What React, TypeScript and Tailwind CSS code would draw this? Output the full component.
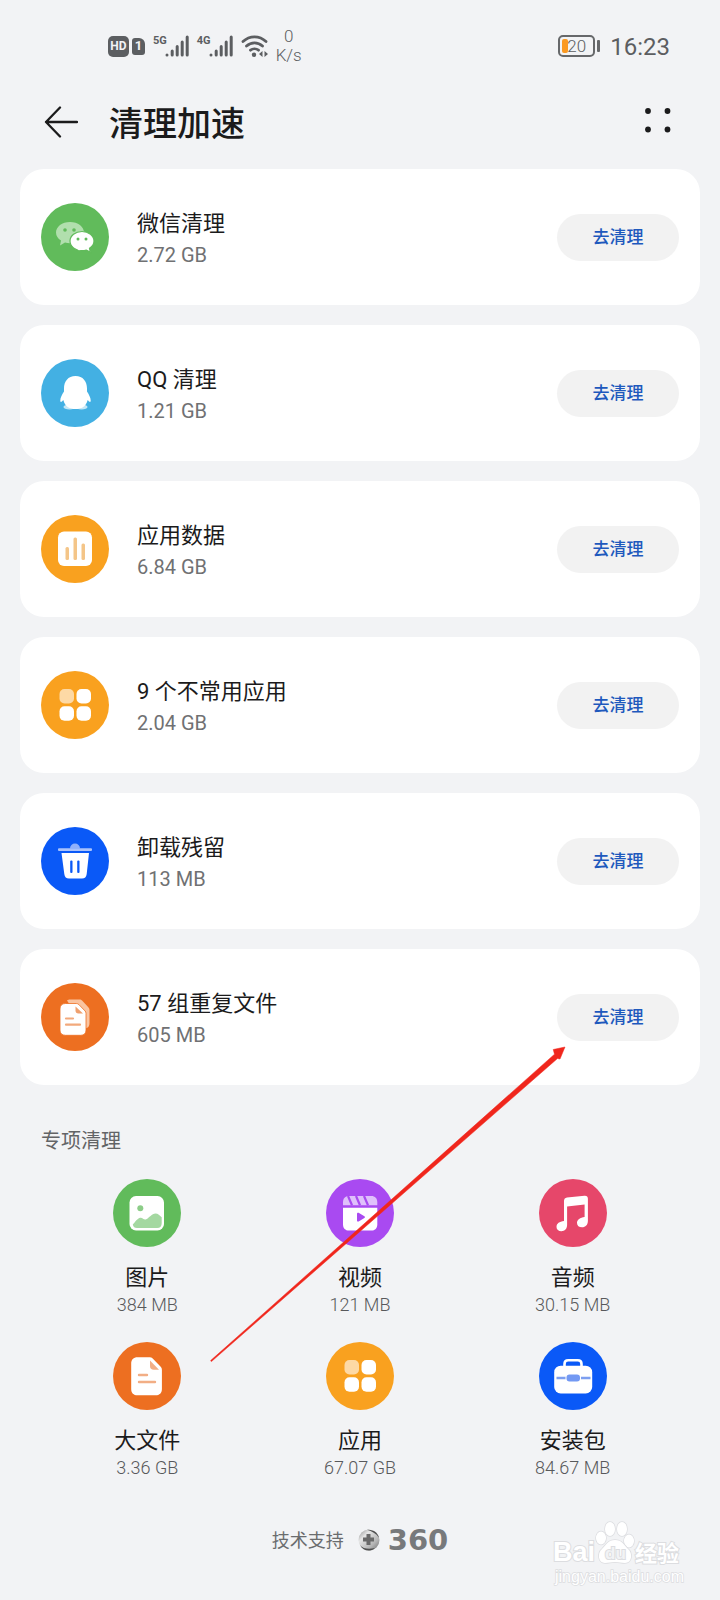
import type { ReactNode } from "react"

type CleanItem = {
  title: string
  size: string
  icon: ReactNode
}

function Disc({ color, children }: { color: string; children: ReactNode }) {
  return (
    <svg viewBox="0 0 68 68" className="size-[68px] shrink-0" fill="#fff" aria-hidden="true">
      <circle cx="34" cy="34" r="34" fill={color} />
      {children}
    </svg>
  )
}

function WechatIcon() {
  return (
    <Disc color="#61bb5b">
      <path d="M29 19c-8 0-14 4.700-14 10.500 0 3.300 1.900 6.200 5 8.100l-1 4.900 5-3c1.600.5 3.200.7 5 .7 8 0 14-4.900 14-10.700S37 19 29 19z" fill="#b1dfad" />
      <circle cx="24" cy="27" r="1.800" fill="#61bb5b" />
      <circle cx="33" cy="27" r="1.800" fill="#61bb5b" />
      <path d="M41 28.500c-6.700 0-12 4.300-12 9.600s5.300 9.600 12 9.600c1.600 0 3-.2 4.300-.6l4 2-.8-3.800c2.800-1.700 4.500-4.300 4.500-7.200 0-5.300-5.300-9.600-12-9.600z" stroke="#61bb5b" strokeWidth="1.200" />
      <circle cx="37" cy="36" r="1.500" fill="#61bb5b" />
      <circle cx="45" cy="36" r="1.500" fill="#61bb5b" />
    </Disc>
  )
}

function QQIcon() {
  return (
    <Disc color="#43b0e3">
      <ellipse cx="28.500" cy="48" rx="6" ry="2.600" fill="#c5e7f6" />
      <ellipse cx="40.500" cy="48" rx="6" ry="2.600" fill="#c5e7f6" />
      <path d="M34.500 17c-7.500 0-11.500 5.500-11.500 12.500v3c-2 3.200-3.700 6.200-3.700 9 0 2.300 1.300 1.500 3-.5 1 3.600 2.700 5.700 4.700 7.200 4.500 2.400 10.500 2.400 15 0 2-1.500 3.700-3.600 4.700-7.200 1.700 2 3 2.800 3 .5 0-2.800-1.700-5.800-3.700-9v-3C46 22.500 42 17 34.500 17z" />
    </Disc>
  )
}

function DataIcon() {
  return (
    <Disc color="#f9a11f">
      <rect x="17" y="16.500" width="34" height="34.500" rx="6" />
      <g fill="#f4c588">
        <rect x="24.500" y="32" width="3.500" height="13" rx="1.500" />
        <rect x="32.500" y="22.500" width="3.500" height="22.500" rx="1.500" />
        <rect x="40.500" y="28.500" width="3.500" height="16.500" rx="1.500" />
      </g>
    </Disc>
  )
}

function AppsIcon() {
  return (
    <Disc color="#f9a11f">
      <rect x="18.500" y="18" width="14.500" height="14.500" rx="5" fill="#fdd9a5" />
      <rect x="35.500" y="18" width="14.500" height="14.500" rx="5" />
      <rect x="18.500" y="35.200" width="14.500" height="14.500" rx="5" />
      <rect x="35.500" y="35.200" width="14.500" height="14.500" rx="5" />
    </Disc>
  )
}

function TrashIcon() {
  return (
    <Disc color="#0a59f7">
      <path d="M29 21.500a5 5 0 0 1 10 0z" fill="#8fb0fb" />
      <rect x="17" y="21.300" width="34" height="2.800" rx="1" fill="#a9c2fc" />
      <path d="M20.500 26h27.500l-2.300 21c-.4 3-1.900 4.500-4.700 4.500H28c-2.800 0-4.300-1.500-4.700-4.500z" />
      <rect x="29.200" y="33.500" width="2.300" height="12.500" rx="1" fill="#0a59f7" />
      <rect x="36.200" y="33.500" width="2.300" height="12.500" rx="1" fill="#0a59f7" />
    </Disc>
  )
}

function CopiesIcon() {
  return (
    <Disc color="#ed6f21">
      <path d="M26 17.500c1-.7 2-1 3.500-1h9c1.200 0 2 .4 2.800 1.200l6 6.500c.8.800 1.200 1.700 1.200 2.800v13c0 3-1.200 5-4 5.500z" fill="#fac4a0" />
      <path d="M24.500 20.500h10.800c1 0 1.900.4 2.600 1.100l6.100 6.300c.7.700 1 1.500 1 2.500V47c0 3.300-1.900 5.300-5.200 5.300H24.500c-3.600 0-5.500-2-5.500-5.300V26c0-3.500 1.900-5.500 5.500-5.500z" stroke="#ed6f21" strokeWidth=".8" />
      <path d="M34.500 23.500v4c0 2 1 3 3 3H42z" fill="#efa06e" />
      <path d="M25 35.500h7M25 41.700h14" stroke="#f2a97c" strokeWidth="2.200" strokeLinecap="round" />
    </Disc>
  )
}

function ImageIcon() {
  return (
    <Disc color="#61bb5b">
      <rect x="16.500" y="17" width="34.500" height="34.500" rx="6.500" />
      <circle cx="27.300" cy="29.300" r="3" fill="#8ccd88" />
      <path d="M19.800 45.500c2.500-2.800 4.600-6.300 7.400-6.800 2.700-.4 3.500 2.700 6 1.600 3-1.500 5.600-5.900 9.300-5.900 2.500 0 4.300 2.200 6.200 3.800v6c0 3-1.500 4.800-4.500 4.800H24c-2.300 0-3.800-1-4.200-3.500z" fill="#a4d8a1" />
    </Disc>
  )
}

function VideoIcon() {
  return (
    <Disc color="#a94af1">
      <path d="M17 26.300v-3c0-4 2.200-6.300 6-6.300h22.300c3.800 0 6 2.300 6 6.300v3z" fill="#dfc0fb" />
      <path d="M22 17l4 9.300M30 17l4 9.300M38 17l4 9.300" stroke="#a94af1" strokeWidth="2.200" />
      <path d="M17 28.700h34.300v16.500c0 4-2.200 6.300-6 6.300H23c-3.800 0-6-2.300-6-6.300z" />
      <path d="M31 34.800c0-1 .8-1.400 1.600-1l5.800 3.500c.8.500.8 1.200 0 1.700l-5.800 3.500c-.8.400-1.600 0-1.600-1z" fill="#a94af1" />
    </Disc>
  )
}

function MusicIcon() {
  return (
    <Disc color="#e6476a">
      <path d="M25 22c0-2 1-3.200 3-3.500l17.500-1.700c2.200-.2 3.400.9 3.400 3V42c0 3.800-2.400 6.300-5.900 6.300-3 0-5-1.800-5-4.400 0-3.600 3.200-5.400 7.600-6V25.600l-17.500 2V46c0 3.800-2.400 6.200-5.700 6.200-2.900 0-4.900-1.700-4.900-4.200 0-3.500 3-5.300 7.500-5.900z" />
    </Disc>
  )
}

function FileIcon() {
  return (
    <Disc color="#ed6f21">
      <path d="M24.500 15.300h12.200c1.200 0 2.200.4 3 1.200l8 8.200c.8.800 1.200 1.800 1.200 3V47c0 4-2.300 6.300-6.300 6.300H24.500c-4 0-6.300-2.300-6.300-6.300V21.600c0-4 2.300-6.300 6.300-6.300z" />
      <path d="M37 18.500V24c0 2.500 1.300 3.800 3.800 3.800H46z" fill="#f2ae85" />
      <path d="M26 33h8M26 40h16" stroke="#f2ae85" strokeWidth="2.400" strokeLinecap="round" />
    </Disc>
  )
}

function PackageIcon() {
  return (
    <Disc color="#0a59f7">
      <path d="M25.500 25v-3c0-2.500 1.200-3.700 3.700-3.700h9.600c2.500 0 3.700 1.200 3.700 3.700v3" fill="none" stroke="#fff" strokeWidth="2.600" />
      <rect x="15.200" y="23.700" width="38" height="27.800" rx="6.500" />
      <path d="M17.500 36h34" stroke="#7d9ff0" strokeWidth="2.400" />
      <rect x="26.500" y="31.500" width="15.500" height="9" rx="4" fill="#fff" />
      <rect x="27.500" y="32.500" width="13.500" height="7" rx="3" fill="#7399f3" />
    </Disc>
  )
}

const cleanItems: CleanItem[] = [
  { title: "微信清理", size: "2.72 GB", icon: <WechatIcon /> },
  { title: "QQ 清理", size: "1.21 GB", icon: <QQIcon /> },
  { title: "应用数据", size: "6.84 GB", icon: <DataIcon /> },
  { title: "9 个不常用应用", size: "2.04 GB", icon: <AppsIcon /> },
  { title: "卸载残留", size: "113 MB", icon: <TrashIcon /> },
  { title: "57 组重复文件", size: "605 MB", icon: <CopiesIcon /> },
]

const categories: CleanItem[] = [
  { title: "图片", size: "384 MB", icon: <ImageIcon /> },
  { title: "视频", size: "121 MB", icon: <VideoIcon /> },
  { title: "音频", size: "30.15 MB", icon: <MusicIcon /> },
  { title: "大文件", size: "3.36 GB", icon: <FileIcon /> },
  { title: "应用", size: "67.07 GB", icon: <AppsIcon /> },
  { title: "安装包", size: "84.67 MB", icon: <PackageIcon /> },
]

function Signal({ label }: { label: string }) {
  return (
    <div className="flex h-[22px] items-start">
      <span className="-mr-[2px] text-[11px] leading-[11px] font-bold">{label}</span>
      <svg viewBox="0 0 24 22" className="h-[22px] w-6" stroke="#5c5e61" strokeWidth="3" strokeLinecap="round" aria-hidden="true">
        <path d="M2 20v0M7.200 16v4M12.200 11.500v8.500M17.200 7v13M22.200 2v18" />
      </svg>
    </div>
  )
}

function StatusBar() {
  return (
    <div className="flex h-[92px] items-center justify-between pr-[50px] pl-[108px] text-[#5c5e61]">
      <div className="flex items-center gap-2">
        <div className="flex items-center gap-[3px]">
          <span className="flex h-[21px] w-[21px] items-center justify-center rounded-[5px] bg-[#5c5e61] text-[12px] font-bold text-[#f2f3f5]">
            HD
          </span>
          <span className="flex h-[17px] w-[13px] items-center justify-center rounded-[3px] rounded-tr-[6px] bg-[#5c5e61] text-[13px] font-bold text-[#f2f3f5]">
            1
          </span>
        </div>
        <Signal label="5G" />
        <Signal label="4G" />
        <svg viewBox="0 0 27 24" className="h-6 w-[27px]" fill="none" stroke="#5c5e61" strokeWidth="2.800" strokeLinecap="round" aria-hidden="true">
          <path d="M2 7.500c6.500-6.300 16.500-6.300 23 0M5.500 12c4.600-4.200 11.400-4.200 16 0M9.500 16.200c2.300-1.900 5.700-1.900 8 0" />
          <circle cx="13" cy="20.800" r="2.200" fill="#5c5e61" stroke="none" />
          <path d="M21.500 17v6l-3.500-3zM23.500 17v6l3.500-3z" fill="#5c5e61" stroke="none" />
        </svg>
        <div className="text-center text-[17px] leading-[19px] font-light">
          <div>0</div>
          <div>K/s</div>
        </div>
      </div>
      <div className="flex items-center">
        <div className="flex h-[22px] w-[37px] items-center rounded-[5px] border-2 border-[#66686a] px-[2px]">
          <span className="h-[14px] w-[6px] rounded-[2px] bg-[#fb9a22]" />
          <span className="-ml-px text-[17px] leading-[18px] font-light">20</span>
        </div>
        <span className="ml-[2px] h-3 w-[3px] rounded-[1px] bg-[#66686a]" />
        <span className="ml-[10px] pt-[2px] text-[24px] leading-7">16:23</span>
      </div>
    </div>
  )
}

function Header() {
  return (
    <header className="flex h-[60px] items-center pr-[46px] pl-11">
      <button type="button" aria-label="返回">
        <svg viewBox="0 0 34 32" className="h-8 w-[34px]" fill="none" stroke="#1b1b1c" strokeWidth="2.300" strokeLinecap="round" strokeLinejoin="round">
          <path d="M33 16H2M16 1.500L2 16l14 14.500" />
        </svg>
      </button>
      <h1 className="ml-[31px] flex-1 pt-1 text-[34px] leading-10 font-medium text-[#1b1b1c]">清理加速</h1>
      <button type="button" aria-label="更多">
        <svg viewBox="0 0 32 32" className="size-8" fill="#1b1b1c">
          <circle cx="6" cy="5" r="2.900" />
          <circle cx="25.500" cy="5" r="2.900" />
          <circle cx="6" cy="23.500" r="2.900" />
          <circle cx="25.500" cy="23.500" r="2.900" />
        </svg>
      </button>
    </header>
  )
}

function CleanCard({ title, size, icon }: CleanItem) {
  return (
    <li className="flex h-[136px] items-center rounded-[24px] bg-white px-[21px]">
      {icon}
      <div className="ml-7 flex-1 pt-[3px]">
        <h2 className="text-[22px] leading-8 text-[#1b1b1c]">{title}</h2>
        <p className="text-[20px] leading-[30px] text-[#707173]">{size}</p>
      </div>
      <button type="button" className="h-[47px] w-[122px] rounded-full bg-[#f2f2f2] pt-[2px] text-[17px] font-medium text-[#1e59bd]">
        去清理
      </button>
    </li>
  )
}

function Category({ title, size, icon }: CleanItem) {
  return (
    <a href="#" className="flex flex-col items-center">
      {icon}
      <span className="mt-[15px] text-[22px] leading-8 text-[#1b1b1c]">{title}</span>
      <span className="text-[18px] leading-[21px] font-light text-[#58595b]">{size}</span>
    </a>
  )
}

function Footer() {
  return (
    <footer className="mt-[46px] flex h-8 items-center justify-center text-[#6a6c6e]">
      <span className="text-[18px]">技术支持</span>
      <svg viewBox="0 0 22 22" className="ml-[14px] size-[22px]" aria-hidden="true">
        <defs>
          <linearGradient id="ball" x1="0" y1="0" x2="1" y2="1">
            <stop offset="0" stopColor="#8a8a8a" />
            <stop offset=".3" stopColor="#e6e6e6" />
            <stop offset=".7" stopColor="#b5b5b5" />
            <stop offset="1" stopColor="#6b6b6b" />
          </linearGradient>
        </defs>
        <circle cx="11" cy="11" r="10.500" fill="url(#ball)" />
        <path d="M9 .8c6-.8 11 3 12 8-3-4.500-7-6.500-12-8zM2 16c3 4 9 4.500 15 3-5 4.500-12 3-15-3z" fill="#4f4f4f" />
        <path d="M8.500 5h4v3.500H16v4h-3.500V16h-4v-3.500H5v-4h3.500z" fill="#696969" />
      </svg>
      <span className="ml-2 font-['DejaVu_Sans'] text-[29px] leading-8 font-bold text-[#77797b]">360</span>
    </footer>
  )
}

function Watermark() {
  return (
    <svg viewBox="0 0 136 70" className="absolute right-[32px] bottom-[10px] h-[70px] w-[136px]" fill="#fff" stroke="#dcdde0" strokeWidth="2" paintOrder="stroke">
      <text x="1" y="41" fontSize="27" fontWeight="700" fontFamily="Liberation Sans">Bai</text>
      <g strokeWidth="1.500">
        <ellipse cx="49" cy="18" rx="5" ry="6.500" />
        <ellipse cx="58" cy="9" rx="5" ry="7" />
        <ellipse cx="70" cy="9" rx="5" ry="7" />
        <ellipse cx="77" cy="21" rx="5" ry="6.500" />
        <path d="M63 20c7 0 9 5 13 9 5 4 4 14-3 14-4 0-6-1-10-1s-6 1-10 1c-7 0-8-10-3-14 4-4 6-9 13-9z" />
      </g>
      <text x="53" y="39" fontSize="17" fontWeight="700" fontFamily="Liberation Sans" fill="#f2f3f5">du</text>
      <text x="83" y="41" fontSize="22" fontWeight="700" fontFamily="Noto Sans CJK SC">经验</text>
      <text x="3" y="62" fontSize="16" fontFamily="Liberation Sans" strokeWidth="1.500">jingyan.baidu.com</text>
    </svg>
  )
}

export default function App() {
  return (
    <main className="relative min-h-screen bg-[#f2f3f5] font-['Roboto','Noto_Sans_CJK_SC',sans-serif]">
      <StatusBar />
      <Header />

      <ul className="mx-5 mt-[17px] flex flex-col gap-5">
        {cleanItems.map((item) => (
          <CleanCard key={item.title} {...item} />
        ))}
      </ul>

      <section className="mt-[42px] px-[41px]">
        <h2 className="text-[20px] leading-7 text-[#626466]">专项清理</h2>
        <div className="mt-6 grid grid-cols-3 gap-y-[27px]">
          {categories.map((item) => (
            <Category key={item.title} {...item} />
          ))}
        </div>
      </section>

      <Footer />

      {/* Pointer to the duplicate files button */}
      <svg viewBox="0 0 356 316" className="pointer-events-none absolute top-[1046px] left-[210px] h-[316px] w-[356px]" fill="#f0261c" aria-hidden="true">
        <path d="M.600 314.600L344.500 8.200L343.200 3.500L355 1L350 13L347.500 12.500L1.400 315.600z" stroke="#f0261c" strokeWidth=".5" />
      </svg>
      <Watermark />
    </main>
  )
}
